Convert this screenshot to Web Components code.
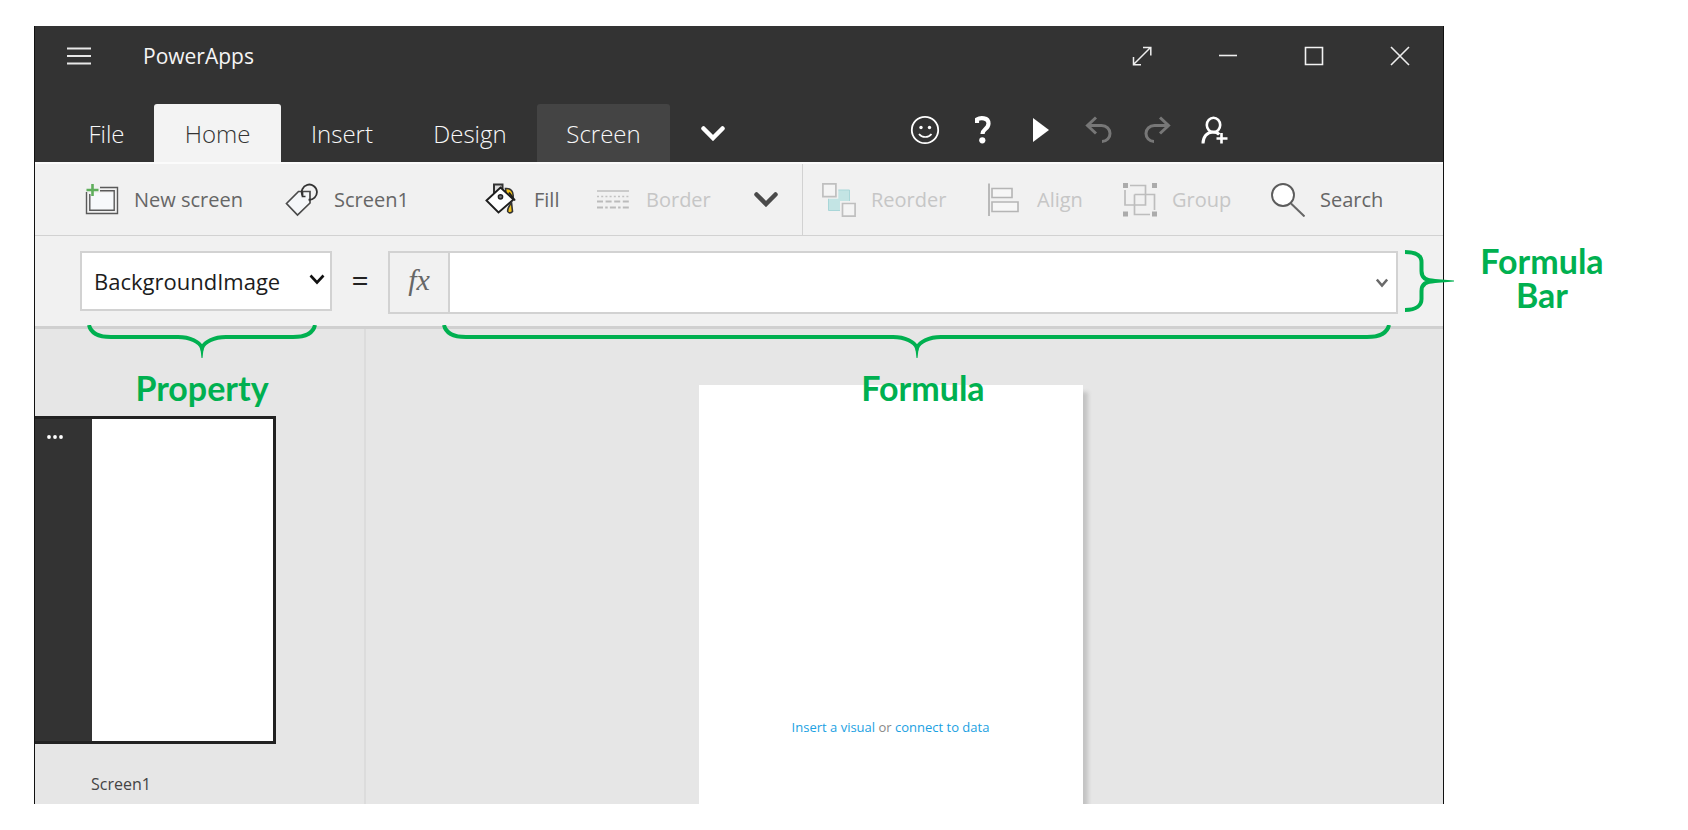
<!DOCTYPE html>
<html lang="en">
<head>
<meta charset="utf-8">
<title>PowerApps</title>
<style>
  html, body { margin: 0; background: #fff; }
  body { font-family: "Open Sans", "Noto Sans", sans-serif; color: #333; }
</style>
</head>
<body>
<power-page></power-page>

<script>
const define = (name, html) => {
  const t = document.createElement('template');
  t.innerHTML = html;
  customElements.define(name, class extends HTMLElement {
    constructor() {
      super();
      this.attachShadow({ mode: 'open' }).append(t.content.cloneNode(true));
    }
  });
};

const ICONS = {
  menu: [24, 18, '<path d="M0 1.5h24M0 9h24M0 16.5h24" stroke="#e8e8e8" stroke-width="1.8"/>'],
  expand: [20, 20, '<path d="M2 18 18 2M11 1.5h7.8V9.500M1.500 11v7.800H9" stroke="#eee" stroke-width="1.5" fill="none"/>'],
  minimise: [20, 20, '<path d="M1 9.500h18" stroke="#eee" stroke-width="1.6"/>'],
  maximise: [20, 20, '<path d="M1.500 1.500h17v17h-17z" stroke="#f2f2f2" stroke-width="1.6" fill="none"/>'],
  close: [20, 20, '<path d="M1 1l18 18M19 1 1 19" stroke="#eee" stroke-width="1.6"/>'],
  chevron: [24, 15, '<path d="M2.500 2.500 12 12l9.500-9.500" stroke="currentColor" stroke-width="4.500" stroke-linecap="round" fill="none"/>'],
  smile: [30, 30, '<circle cx="15" cy="15" r="13.200" stroke="#fff" stroke-width="1.8" fill="none"/><circle cx="11" cy="12.500" r="1.700" fill="#fff"/><circle cx="19.500" cy="12.500" r="1.700" fill="#fff"/><path d="M9 19c3 4 9.500 4 12.500 0" stroke="#fff" stroke-width="1.700" fill="none"/>'],
  help: [16, 28, '<path d="M2 7V3.500C5 1.500 13.500 1 13.500 7.500c0 5.500-6 5.500-6 10.500" stroke="#fff" stroke-width="4.200" fill="none"/><circle cx="7.300" cy="24.300" r="3.100" fill="#fff"/>'],
  play: [16, 24, '<path d="M0 0l16 12L0 24z" fill="#fff"/>'],
  undo: [28, 28, '<path d="M11 1.500 2.500 9.500 11 17.500M3 9.500h13.500c5 0 8.500 3.500 8.500 8 0 4.200-3.200 8-8 8" stroke="#777" stroke-width="3" fill="none"/>'],
  redo: [28, 28, '<path d="M17 1.500 25.500 9.500 17 17.500M25 9.500H11.500c-5 0-8.500 3.500-8.500 8 0 4.200 3.200 8 8 8" stroke="#777" stroke-width="3" fill="none"/>'],
  person: [28, 28, '<ellipse cx="12.500" cy="9" rx="6.700" ry="7.300" stroke="#fff" stroke-width="2.600" fill="none"/><path d="M2 27.500c0-6.500 4-11.500 10-11.500 3 0 5 1 6.200 2.500" stroke="#fff" stroke-width="3" fill="none"/><path d="M20.500 17v10.500M15.500 22.500h11" stroke="#fff" stroke-width="2.600"/>'],
  newscreen: [34, 34, '<path d="M5 10h24v17H5z" fill="#f7f9fb"/><path d="M15 4.500h17.500v26h-31V9M15 7.800h14.200v19.400H4.800V11" stroke="#5a5a5a" stroke-width="1.400" fill="none"/><path d="M7.500 1v12M1.500 7h12" stroke="#5fae5c" stroke-width="2.600"/>'],
  tag: [34, 34, '<path d="M1.500 20.500 13.500 8.500h11.500v11.500L12.500 32z" stroke="#4a4a4a" stroke-width="1.700" fill="#f5f7f9"/><path d="M17.500 12.500a7.600 7.600 0 1 1 6 4.200" stroke="#333" stroke-width="1.800" fill="none"/><path d="M17.500 9v4.500h3" stroke="#333" stroke-width="1.700" fill="none"/>'],
  fill: [34, 34, '<path d="M20.500 5.500c5-.5 8.500 3 7.500 9l-1.500 2.500-5.500-7z" fill="#f2c21b" stroke="#333" stroke-width="1.600"/><path d="M9 11V1.500h8.500V7" fill="#ddd" stroke="#333" stroke-width="2"/><path d="M1.500 17.500 15.500 4.500 28.500 16.500 13.500 29.500z" fill="#fff" stroke="#1e1e1e" stroke-width="1.900"/><path d="M24 9.500l6 8" stroke="#1e1e1e" stroke-width="1.800"/><circle cx="15.500" cy="13.800" r="2.100" fill="#777" stroke="#222" stroke-width="1.500"/><path d="M26.500 19.500 27.500 28.500c-1.500 2-4 1.700-4.800 0-.4-3 1.300-5.500 3.800-9z" fill="#f2c21b" stroke="#333" stroke-width="1.600"/>'],
  border: [34, 34, '<path d="M0 8h32" stroke="#c2c2c2" stroke-width="1.600"/><path d="M0 13.500h32" stroke="#c2c2c2" stroke-width="1.600" stroke-dasharray="2 2.200"/><path d="M0 18.500h32" stroke="#bbb" stroke-width="1.900" stroke-dasharray="6 2.600"/><path d="M0 24.500h32" stroke="#bbb" stroke-width="1.900" stroke-dasharray="6 2.200 2.500 2.200"/>'],
  reorder: [34, 34, '<path d="M6.500 7h21v20.500h-21z" fill="#c3e4e4" stroke="#a9d6d8" stroke-width="1"/><path d="M.8 .8h13.500v13H.8zM20 20h13v13H20z" fill="#f2f2f2" stroke="#f1f1f1" stroke-width="4"/><path d="M.9 .9h13v12.700H.9zM20.500 20.500h12.600v12.600H20.500z" fill="#f4f4f4" stroke="#bfbfbf" stroke-width="1.700"/>'],
  align: [34, 34, '<path d="M1 .5v32.500" stroke="#b3b3b3" stroke-width="1.800"/><path d="M4 5.500h20v9H4zM4 19h26v9.500H4z" fill="#f6f6f6" stroke="#b5b5b5" stroke-width="1.600"/>'],
  group: [34, 34, '<path d="M7 2.500h15.500v19.500H2V7M11.500 11.500h20v15.500M27 31.500H11.500v-20" stroke="#bdbdbd" stroke-width="1.700" fill="none"/><path d="M0 0h5v5H0zM29 0h5v5h-5zM0 28.500h5v5H0zM29 28.500h5v5h-5z" fill="#ababab"/>'],
  search: [34, 34, '<path d="M20 20.500 33.500 33.500" stroke="#666" stroke-width="2"/><circle cx="12" cy="12" r="11" fill="#fff" stroke="#5c5c5c" stroke-width="1.900"/>'],
  caret: [16, 11, '<path d="M1.500 1.500 8 8.500l6.500-7" stroke="#111" stroke-width="2.600" fill="none"/>'],
  smallcaret: [12, 10, '<path d="M.8 1.500 6 7.500l5.200-6" stroke="#6a6a6a" stroke-width="2.600" fill="none"/>'],
  dots: [16, 4, '<circle cx="2" cy="2" r="1.900" fill="#fff"/><circle cx="8" cy="2" r="1.900" fill="#fff"/><circle cx="14" cy="2" r="1.900" fill="#fff"/>'],
  braceLeft: [24, 34, '<path d="M2 0C4 9 14 12 24 12" stroke="#00b050" stroke-width="4" fill="none"/>'],
  braceRight: [24, 34, '<path d="M22 0C20 9 10 12 0 12" stroke="#00b050" stroke-width="4" fill="none"/>'],
  braceMiddle: [48, 34, '<path d="M0 12C12 12 22 17 24 23 26 17 36 12 48 12" stroke="#00b050" stroke-width="4" fill="none"/><path d="M22 20h4l-1.500 13h-1z" fill="#00b050"/>'],
  braceSide: [50, 62, '<path d="M0 2c12 0 16.500 4 16.500 10v9c0 6 4 10 13.500 10-9.500 0-13.500 4-13.500 10v8c0 6-4.500 11-16.500 11" stroke="#00b050" stroke-width="4" fill="none"/><path d="M24 28.500 49 30.500v1L24 33.500z" fill="#00b050"/>']
};

customElements.define('app-icon', class extends HTMLElement {
  constructor() {
    super();
    const [w, h, body] = ICONS[this.getAttribute('name')];
    this.attachShadow({ mode: 'open' }).innerHTML =
      `<style>:host{display:block;flex:none;line-height:0}svg{display:block}</style>
       <svg width="${w}" height="${h}" viewBox="0 0 ${w} ${h}" aria-hidden="true">${body}</svg>`;
  }
});

define('icon-button', `
<style>
  :host { display: flex; }
  button { all: unset; box-sizing: border-box; flex: 1; display: flex; align-items: center; justify-content: center; }
</style>
<button type="button"><slot></slot></button>`);

define('title-bar', `
<style>
  :host { display: flex; align-items: center; height: 60px; padding: 0 0 0 32px; color: #f5f5f5; }
  .name { margin-left: 52px; font-size: 21px; line-height: 28px; }
  .controls { display: flex; margin-left: auto; }
  .controls icon-button { width: 86px; height: 60px; }
</style>
<icon-button><app-icon name="menu"></app-icon></icon-button>
<span class="name">PowerApps</span>
<div class="controls">
  <icon-button><app-icon name="expand"></app-icon></icon-button>
  <icon-button><app-icon name="minimise"></app-icon></icon-button>
  <icon-button><app-icon name="maximise"></app-icon></icon-button>
  <icon-button><app-icon name="close"></app-icon></icon-button>
</div>`);

define('tab-item', `
<style>
  :host { display: flex; color: #f8f8f8; border-radius: 3px 3px 0 0; }
  :host([selected]) { background: #f3f3f3; color: #333; }
  :host([context]) { background: #444; }
  button { all: unset; flex: 1; padding-top: 2px; text-align: center; font-weight: 300; font-size: 24px; line-height: 56px; }
</style>
<button type="button" role="tab"><slot></slot></button>`);

define('tab-strip', `
<style>
  :host { display: flex; align-items: flex-start; padding: 18px 199px 0 24px; }
  nav { display: grid; grid-template-columns: 95px 127px 122px 134px 133px 86px; height: 58px; color: #fff; }
  .actions { display: grid; grid-auto-flow: column; grid-auto-columns: 58px; height: 52px; margin-left: auto; }
</style>
<nav>
  <tab-item>File</tab-item>
  <tab-item selected>Home</tab-item>
  <tab-item>Insert</tab-item>
  <tab-item>Design</tab-item>
  <tab-item context>Screen</tab-item>
  <icon-button><app-icon name="chevron"></app-icon></icon-button>
</nav>
<div class="actions">
  <icon-button><app-icon name="smile"></app-icon></icon-button>
  <icon-button><app-icon name="help"></app-icon></icon-button>
  <icon-button><app-icon name="play"></app-icon></icon-button>
  <icon-button><app-icon name="undo"></app-icon></icon-button>
  <icon-button><app-icon name="redo"></app-icon></icon-button>
  <icon-button><app-icon name="person"></app-icon></icon-button>
</div>`);

define('tool-button', `
<style>
  :host { display: flex; color: #666; }
  :host([muted]) { color: #c6c6c6; }
  button { all: unset; display: flex; align-items: center; gap: 15px; font-size: 20px; line-height: 28px; white-space: nowrap; }
</style>
<button type="button"><slot name="icon"></slot><slot></slot></button>`);

define('tool-bar', `
<style>
  :host { display: flex; height: 71px; background: #f1f1f1; border-top: 2px solid #fbfbfb; border-bottom: 1px solid #d2d2d2; box-sizing: content-box; }
  div { display: grid; }
  .edit { grid-template-columns: 200px 200px 112px 145px 48px; padding: 0 12px 0 50px; color: #4a4a4a; }
  .arrange { grid-template-columns: 166px 135px 148px auto; padding-left: 19px; border-left: 1px solid #d2d2d2; }
</style>
<div class="edit">
  <tool-button><app-icon slot="icon" name="newscreen"></app-icon>New screen</tool-button>
  <tool-button><app-icon slot="icon" name="tag"></app-icon>Screen1</tool-button>
  <tool-button><app-icon slot="icon" name="fill"></app-icon>Fill</tool-button>
  <tool-button muted><app-icon slot="icon" name="border"></app-icon>Border</tool-button>
  <icon-button><app-icon name="chevron"></app-icon></icon-button>
</div>
<div class="arrange">
  <tool-button muted><app-icon slot="icon" name="reorder"></app-icon>Reorder</tool-button>
  <tool-button muted><app-icon slot="icon" name="align"></app-icon>Align</tool-button>
  <tool-button muted><app-icon slot="icon" name="group"></app-icon>Group</tool-button>
  <tool-button><app-icon slot="icon" name="search"></app-icon>Search</tool-button>
</div>`);

define('brace-mark', `
<style>
  :host { display: flex; height: 34px; }
  i { flex: 1; height: 4px; margin-top: 10px; background: #00b050; }
</style>
<app-icon name="braceLeft"></app-icon><i></i><app-icon name="braceMiddle"></app-icon><i></i><app-icon name="braceRight"></app-icon>`);

define('note-label', `
<style>
  :host { display: block; text-align: center; color: #00b050; font: bold 34px/34px Lato, sans-serif; }
</style>
<slot></slot>`);

define('formula-bar', `
<style>
  :host { display: flex; align-items: flex-start; padding: 15px 45px 12px 45px; background: #f1f1f1; border-bottom: 3px solid #d0d0d0; position: relative; z-index: 2; }
  .property { position: relative; width: 252px; }
  select { appearance: none; box-sizing: border-box; display: block; width: 100%; height: 60px; margin: 0; padding: 0 0 0 12px; border: 2px solid #d2d2d2; border-radius: 0; background: #fff; color: #1c1c1c; font: 22px "Open Sans", sans-serif; }
  .property app-icon { position: absolute; right: 7px; top: 23px; }
  .equals { width: 56px; text-align: center; color: #222; font-size: 30px; line-height: 58px; }
  .box { flex: 1; display: flex; box-sizing: border-box; height: 63px; border: 2px solid #d2d2d2; }
  .fx { width: 60px; text-align: center; box-sizing: border-box; border-right: 2px solid #d2d2d2; color: #666; font: italic 30px/54px "Liberation Serif", serif; }
  .value { flex: 1; display: flex; align-items: center; position: relative; background: #fff; padding-right: 8px; }
  input { all: unset; flex: 1; align-self: stretch; padding: 0 12px; font-size: 20px; color: #222; }
  .mark { position: absolute; top: 72px; z-index: 1; }
  .property .mark { left: 7px; right: 15px; top: 74px; }
  .value .mark { left: -8px; right: 5px; }
  .caption { position: absolute; top: 118px; left: 0; right: 0; }
  .property .caption { top: 120px; right: 8px; }
  .side { position: absolute; left: calc(100% - 38px); top: 14px; }
</style>
<div class="property">
  <select aria-label="Property"><option>BackgroundImage</option></select>
  <app-icon name="caret"></app-icon>
  <brace-mark class="mark"></brace-mark>
  <note-label class="caption">Property</note-label>
</div>
<span class="equals">=</span>
<div class="box">
  <span class="fx">fx</span>
  <div class="value">
    <input type="text" aria-label="Formula">
    <icon-button><app-icon name="smallcaret"></app-icon></icon-button>
    <brace-mark class="mark"></brace-mark>
    <note-label class="caption">Formula</note-label>
  </div>
</div>
<app-icon class="side" name="braceSide"></app-icon>`);

define('screen-list', `
<style>
  :host { display: block; box-sizing: border-box; width: 331px; padding-top: 87px; border-right: 2px solid #dcdcdc; }
  .thumb { display: flex; box-sizing: border-box; width: 241px; height: 328px; background: #333; border: 3px solid #222; border-left: 0; }
  icon-button { width: 57px; height: 36px; }
  icon-button app-icon { margin-right: 18px; }
  .sheet { flex: 1; background: #fff; }
  .name { margin: 28px 0 0 56px; color: #444; font-size: 16px; line-height: 24px; }
</style>
<div class="thumb"><icon-button><app-icon name="dots"></app-icon></icon-button><div class="sheet"></div></div>
<div class="name">Screen1</div>`);

define('design-canvas', `
<style>
  :host { display: flex; flex: 1; justify-content: center; padding: 56px 28px 0 0; overflow: hidden; }
  .phone { width: 384px; box-sizing: border-box; padding-top: 332px; background: #fff; box-shadow: 6px 6px 4px -1px #c4c4c4; text-align: center; font-size: 13px; line-height: 20px; color: #888; }
  a { color: #1ba1e2; text-decoration: none; }
</style>
<div class="phone"><a href="#visual">Insert a visual</a> or <a href="#data">connect to data</a></div>`);

define('app-window', `
<style>
  :host { display: flex; flex-direction: column; box-sizing: border-box; border: solid #111; border-width: 0 1px; background: #e6e6e6; }
  header { background: #333; }
  main { display: flex; flex: 1; min-height: 0; overflow: hidden; }
</style>
<header><title-bar></title-bar><tab-strip></tab-strip></header>
<tool-bar></tool-bar>
<formula-bar></formula-bar>
<main><screen-list></screen-list><design-canvas></design-canvas></main>`);

define('power-page', `
<style>
  :host { display: grid; grid-template-columns: 1fr 244px; box-sizing: border-box; height: 100vh; padding: 26px 0 26px 34px; }
  app-window { min-height: 0; }
  aside { padding: 218px 48px 0 0; }
  note-label { width: 130px; margin: 0 auto; }
</style>
<app-window></app-window>
<aside><note-label>Formula Bar</note-label></aside>`);
</script>
</body>
</html>
